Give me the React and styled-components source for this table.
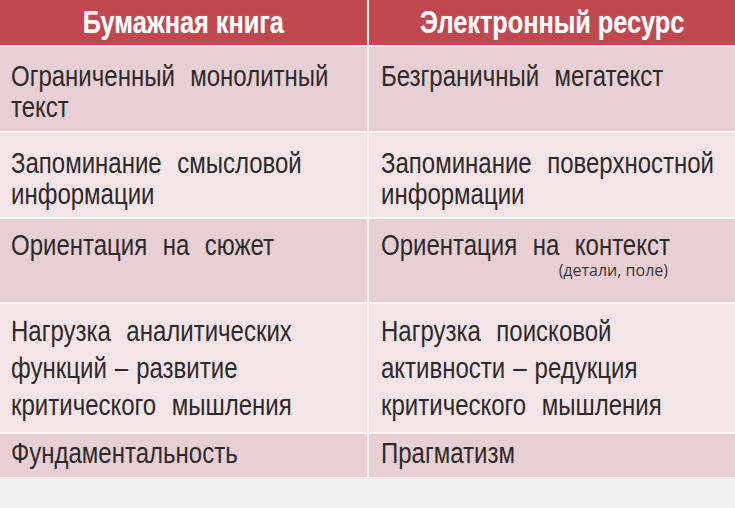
import React from "react";
import styled, { createGlobalStyle } from "styled-components";

// \u2004 — narrow gap around the dash (not affected by word-spacing)
const D = "\u2004–\u2004";

const rows = [
  {
    left: "Ограниченный монолитный\nтекст",
    right: "Безграничный мегатекст",
    height: 84,
    pad: 13,
    lh: 31,
    tone: "dark",
  },
  {
    left: "Запоминание смысловой\nинформации",
    right: "Запоминание поверхностной\nинформации",
    height: 84,
    pad: 14,
    lh: 31,
    tone: "light",
  },
  {
    left: "Ориентация на сюжет",
    right: "Ориентация на контекст",
    note: "(детали, поле)",
    height: 83,
    pad: 10,
    lh: 31,
    tone: "dark",
  },
  {
    left: `Нагрузка аналитических\nфункций${D}развитие\nкритического мышления`,
    right: `Нагрузка поисковой\nактивности${D}редукция\nкритического мышления`,
    height: 128,
    pad: 8,
    lh: 37,
    tone: "light",
  },
  {
    left: "Фундаментальность",
    right: "Прагматизм",
    height: 43,
    pad: 3,
    lh: 31,
    tone: "dark",
  },
];

const App = () => {
  return (
    <Page>
      <GlobalStyle />
      <Table>
        <HeadCell>
          <HeadText>Бумажная книга</HeadText>
        </HeadCell>
        <HeadCell>
          <HeadText>Электронный ресурс</HeadText>
        </HeadCell>
        {rows.map((r, i) => (
          <React.Fragment key={i}>
            <Cell tone={r.tone} h={r.height} pad={r.pad} first>
              <Text lh={r.lh}>{r.left}</Text>
            </Cell>
            <Cell tone={r.tone} h={r.height} pad={r.pad}>
              <Text lh={r.lh}>{r.right}</Text>
              {r.note && <Note>{r.note}</Note>}
            </Cell>
          </React.Fragment>
        ))}
      </Table>
    </Page>
  );
};

export default App;

const GlobalStyle = createGlobalStyle`
  body {
    margin: 0;
    background: #f0efef;
  }
`;

const Page = styled.div`
  width: 735px;
  height: 508px;
  background: #f0efef;
  overflow: hidden;
`;

const Table = styled.div`
  display: grid;
  grid-template-columns: 367px 1fr;
  gap: 2px;
  background: #faf4f5;
  padding-bottom: 1px;
  font-family: "Liberation Sans", Arial, sans-serif;
`;

const HeadCell = styled.div`
  height: 45px;
  background: #c24850;
  display: flex;
  align-items: center;
  justify-content: center;
`;

const HeadText = styled.span`
  display: inline-block;
  color: #fff;
  font-weight: bold;
  font-size: 32px;
  line-height: 45px;
  white-space: nowrap;
  transform: scaleX(0.79);
  transform-origin: center;
  text-shadow: 0 0 1px rgba(255, 255, 255, 0.4);
`;

const Cell = styled.div`
  height: ${(p) => p.h}px;
  box-sizing: border-box;
  background: ${(p) => (p.tone === "dark" ? "#e8cfd3" : "#f3e5e7")};
  color: #2d292a;
  padding: ${(p) => p.pad}px 10px 0 ${(p) => (p.first ? 11 : 12)}px;
  overflow: hidden;
`;

const Text = styled.div`
  font-size: 30px;
  line-height: ${(p) => p.lh}px;
  white-space: pre;
  word-spacing: 11px;
  transform: scaleX(0.8);
  transform-origin: 0 0;
`;

const Note = styled.div`
  font-family: "Open Sans", "Liberation Sans", sans-serif;
  font-size: 16px;
  line-height: 21px;
  text-align: right;
  padding-right: 57px;
  color: #3a3536;
`;
